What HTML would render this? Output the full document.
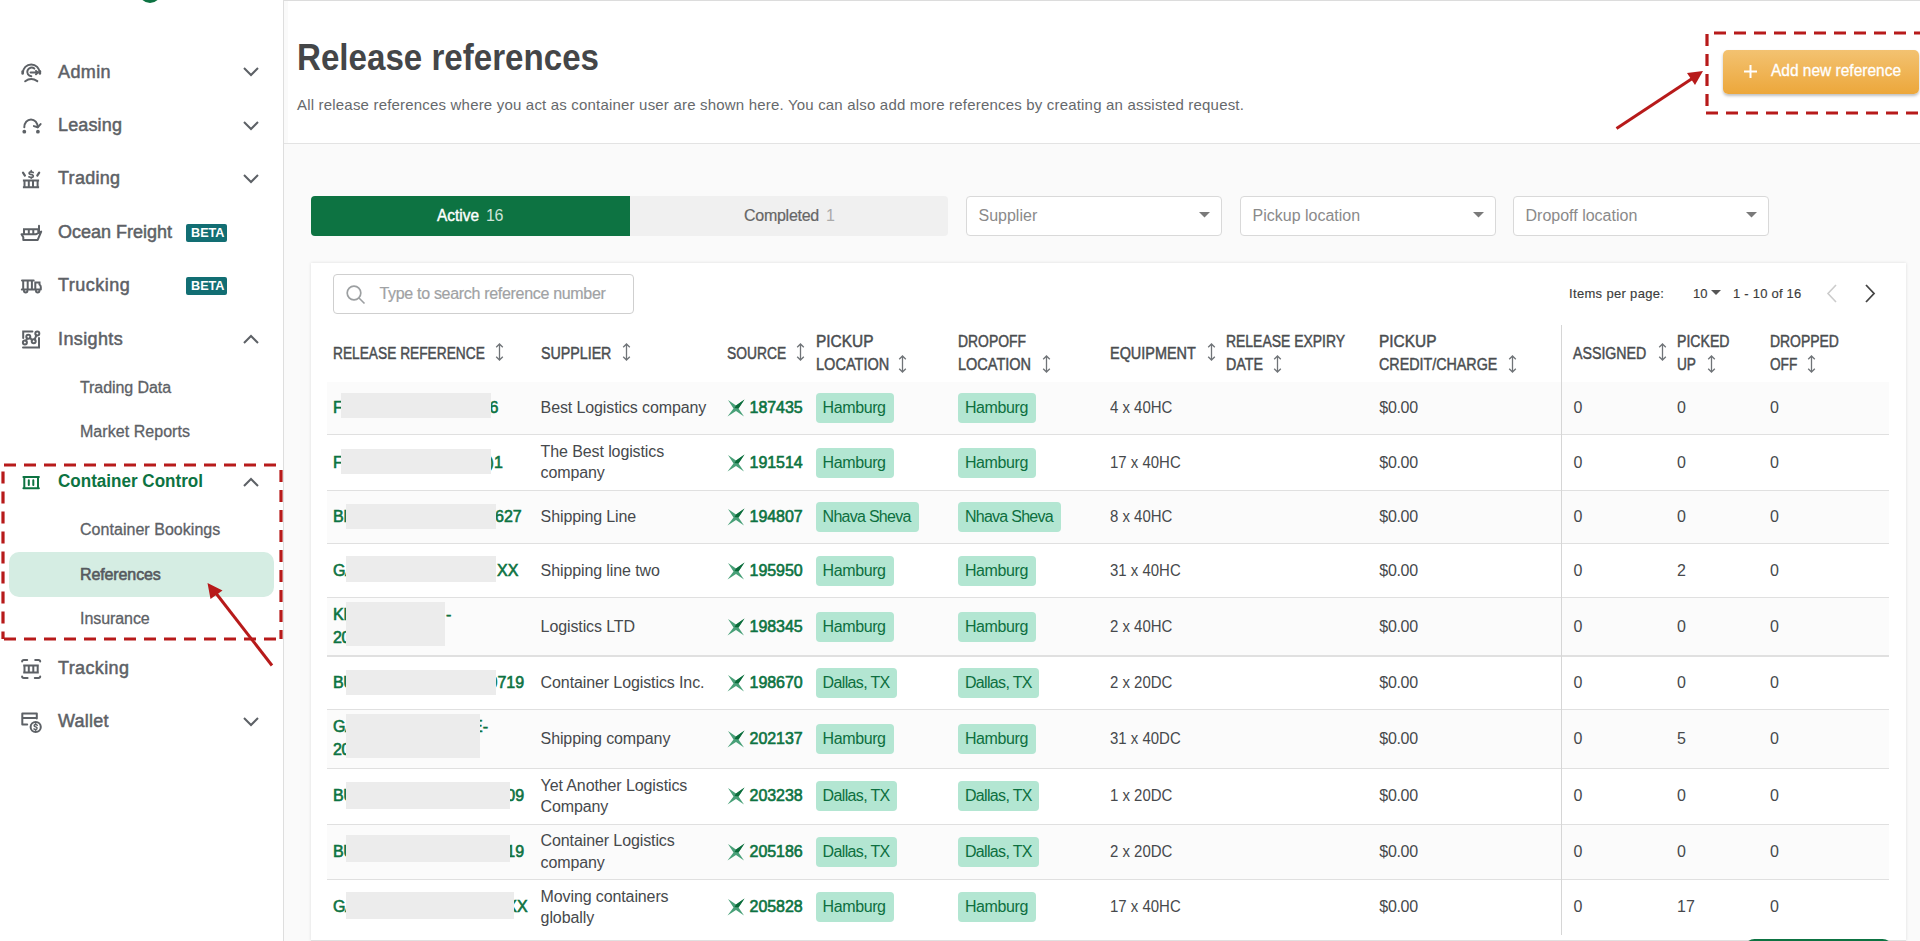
<!DOCTYPE html>
<html><head><meta charset="utf-8"><style>
html,body{margin:0;padding:0;width:1920px;height:941px;overflow:hidden;background:#fff;font-family:"Liberation Sans", sans-serif;}
body{position:relative}
</style></head><body><div style="position:absolute;left:0px;top:0px;width:284px;height:941px;background:#fff"></div><div style="position:absolute;left:283px;top:0px;width:1px;height:941px;background:#dedede"></div><div style="position:absolute;left:284px;top:0px;width:4px;height:941px;background:linear-gradient(90deg,rgba(0,0,0,0.05),rgba(0,0,0,0))"></div><div style="position:absolute;left:139px;top:-19px;width:22px;height:22px;border-radius:50%;background:#0d7342"></div><svg style="position:absolute;left:242px;top:65.35px" width="18" height="12" viewBox="0 0 18 12"><path d="M2 3 L9 10 L16 3" fill="none" stroke="#5d6166" stroke-width="2"/></svg><svg style="position:absolute;left:242px;top:118.9px" width="18" height="12" viewBox="0 0 18 12"><path d="M2 3 L9 10 L16 3" fill="none" stroke="#5d6166" stroke-width="2"/></svg><svg style="position:absolute;left:242px;top:172.3px" width="18" height="12" viewBox="0 0 18 12"><path d="M2 3 L9 10 L16 3" fill="none" stroke="#5d6166" stroke-width="2"/></svg><svg style="position:absolute;left:242px;top:334.2px" width="18" height="12" viewBox="0 0 18 12"><path d="M2 9 L9 2 L16 9" fill="none" stroke="#5d6166" stroke-width="2"/></svg><div style="position:absolute;left:186px;top:223.8px;width:41px;height:18.0px;background:#126e73;border-radius:2px"></div><div style="position:absolute;left:186px;top:277.2px;width:41px;height:18.0px;background:#126e73;border-radius:2px"></div><svg style="position:absolute;left:242px;top:476.5px" width="18" height="12" viewBox="0 0 18 12"><path d="M2 9 L9 2 L16 9" fill="none" stroke="#5d6166" stroke-width="2"/></svg><div style="position:absolute;left:9px;top:552px;width:265px;height:45px;background:#d5ede3;border-radius:10px"></div><svg style="position:absolute;left:242px;top:715px" width="18" height="12" viewBox="0 0 18 12"><path d="M2 3 L9 10 L16 3" fill="none" stroke="#5d6166" stroke-width="2"/></svg><svg style="position:absolute;left:21px;top:62px;overflow:visible" width="21" height="21" viewBox="0 0 21 21" fill="none" stroke="#5d6166" stroke-width="2" stroke-linecap="round"><path d="M1.9 10.8 A8.35 8.4 0 0 1 18.6 10.8"/><path d="M1.6 9.4 V11.6" stroke-width="2.5"/><path d="M18.9 9.2 V11.6" stroke-width="2.5"/><path d="M13.3 6.6 A4.3 4.3 0 1 0 10.3 14.2"/><path d="M9.6 10.6 H16.5"/><path d="M15 8.9 L16.8 10.6 L15 12.3"/><path d="M4.2 19.3 Q10 15 16.3 19.1"/></svg><svg style="position:absolute;left:21px;top:116px;overflow:visible" width="21" height="19" viewBox="0 0 21 19" fill="none" stroke="#5d6166" stroke-width="2" stroke-linecap="round"><path d="M3.3 11.3 A6.7 7.9 0 0 1 16.7 11.3"/><path d="M12.9 10.1 L16.7 11.3 L19.6 8.1" stroke-linejoin="round"/><circle cx="3.3" cy="15.7" r="1.9" fill="#5d6166" stroke="none"/><circle cx="16.9" cy="15.7" r="1.9" fill="#5d6166" stroke="none"/></svg><svg style="position:absolute;left:22px;top:171px;overflow:visible" width="18" height="18" viewBox="0 0 18 18" fill="none" stroke="#5d6166" stroke-width="2" stroke-linecap="round"><path d="M1 1.6 L2.9 4.6 M17.2 1.6 L15.3 4.6" stroke-width="2.2"/><path d="M11.2 1.5 Q9.2 0.4 7.5 1.3 Q6.4 2.8 8.6 3.4 L10.2 3.8 Q11.9 4.6 10.9 6 Q9 7 6.9 5.8" stroke-width="1.7"/><path d="M9.2 -0.4 V0.6 M9.2 6.4 V7.2" stroke-width="1.5"/><path d="M0.9 9.6 H17.1 M0.9 16.3 H17.1 M2.5 9.6 V16.3 M6.8 9.6 V16.3 M11 9.6 V16.3 M15.6 9.6 V16.3" stroke-linecap="butt"/></svg><svg style="position:absolute;left:21px;top:225px;overflow:visible" width="21" height="16" viewBox="0 0 21 16" fill="none" stroke="#5d6166" stroke-width="2" stroke-linecap="round"><path d="M0.5 9.3 H14.7 L20.2 6.6 L16.7 14.9 H2.3 V12.2 Z" stroke-linejoin="round"/><path d="M3 9.3 V4.2 H17.3 V7.5 M7.8 4.2 V9.3 M12.3 4.2 V9.3" stroke-linecap="butt"/><path d="M18 0.8 V6.2"/></svg><svg style="position:absolute;left:21px;top:279px;overflow:visible" width="21" height="15" viewBox="0 0 21 15" fill="none" stroke="#5d6166" stroke-width="2" stroke-linecap="round"><path d="M1 1.5 H12.7 M2.2 1.5 V10.5 M6.7 1.5 V10.5 M10.9 1.5 V10.5 M0.8 10.5 H19.6 M14.3 10.5 V3.5 H18.5 V5.5 Q19.8 6.5 19.8 8 V10.5"/><path d="M3 11.8 A1.7 1.7 0 0 0 6.4 11.8 M15 11.8 A1.7 1.7 0 0 0 18.4 11.8"/></svg><svg style="position:absolute;left:22px;top:330px;overflow:visible" width="18" height="19" viewBox="0 0 18 19" fill="none" stroke="#5d6166" stroke-width="2" stroke-linecap="round"><path d="M1.2 7.9 V1.6 H10.4 M17 7.9 V17.5 H1"/><circle cx="2.9" cy="12.4" r="2"/><circle cx="6.3" cy="6.8" r="2"/><circle cx="11.7" cy="11.3" r="2"/><circle cx="15.3" cy="3.6" r="2"/><path d="M4 10.6 L5.2 8.6 M8.1 7.8 L10 10.2 M12.6 9.5 L14.4 5.4"/></svg><svg style="position:absolute;left:23px;top:475.5px;overflow:visible" width="17" height="14" viewBox="0 0 17 14" fill="none" stroke="#0d7342" stroke-width="2" stroke-linecap="round"><path d="M0.4 1 H15.9 M0.4 12.2 H15.9"/><path d="M1.3 1 V12.2 M15 1 V12.2" stroke-linecap="butt"/><path d="M5.8 4.2 V8.9 M10.3 4.2 V8.9"/></svg><svg style="position:absolute;left:21px;top:659px;overflow:visible" width="20" height="20" viewBox="0 0 20 20" fill="none" stroke="#5d6166" stroke-width="2" stroke-linecap="round"><path d="M1.1 2.6 Q1.1 1.1 2.8 1.1 H6.2 M14.2 1.1 H17.5 Q19.2 1.1 19.2 2.6 M1.1 17.6 Q1.1 19 2.8 19 H6.6 M13.8 19 H17.5 Q19.2 19 19.2 17.6"/><path d="M2.2 6.6 H17.8 M2.2 13.4 H17.8 M3.5 6.6 V13.4 M7.8 6.6 V13.4 M12.3 6.6 V13.4 M16.7 6.6 V13.4" stroke-linecap="butt"/></svg><svg style="position:absolute;left:21px;top:711px;overflow:visible" width="21" height="22" viewBox="0 0 21 22" fill="none" stroke="#5d6166" stroke-width="2" stroke-linecap="round"><path d="M6.2 13.6 H1.3 V2.6 H15.8 V7.6 M1.3 6.9 H15.8" stroke-linejoin="round"/><circle cx="14.7" cy="16" r="5.1"/><path d="M16.3 14.3 Q14.8 13.1 13.4 13.8 Q12.6 15 14.2 15.7 L15.2 16.1 Q16.6 16.9 15.7 18.1 Q14.2 18.9 12.9 17.9" stroke-width="1.4"/><path d="M14.7 12.3 V13.1 M14.7 18.9 V19.7" stroke-width="1.2"/></svg><div style="position:absolute;left:284px;top:0px;width:1636px;height:941px;background:#fafafa"></div><div style="position:absolute;left:288px;top:0px;width:1632px;height:143px;background:#fff"></div><div style="position:absolute;left:284px;top:0px;width:1636px;height:1px;background:#dcdcdc"></div><div style="position:absolute;left:284px;top:143px;width:1636px;height:1px;background:#e3e3e3"></div><div style="position:absolute;left:1723px;top:50px;width:196px;height:44px;background:linear-gradient(#f3c271,#eca73b);border-radius:5px;box-shadow:0 2px 3px rgba(0,0,0,0.25)"></div><div style="position:absolute;left:311px;top:196px;width:319px;height:40px;background:#0d7342;border-radius:4px 0 0 4px"></div><div style="position:absolute;left:630px;top:196px;width:318px;height:40px;background:#f0f0f0;border-radius:0 4px 4px 0"></div><div style="position:absolute;left:966px;top:196px;width:256px;height:40px;background:#fff;border:1px solid #d9d9d9;border-radius:4px;box-sizing:border-box"></div><svg style="position:absolute;left:1199px;top:212px" width="11" height="6" viewBox="0 0 11 6"><path d="M0 0 H11 L5.5 5.5 Z" fill="#7a7a7a"/></svg><div style="position:absolute;left:1240px;top:196px;width:256px;height:40px;background:#fff;border:1px solid #d9d9d9;border-radius:4px;box-sizing:border-box"></div><svg style="position:absolute;left:1473px;top:212px" width="11" height="6" viewBox="0 0 11 6"><path d="M0 0 H11 L5.5 5.5 Z" fill="#7a7a7a"/></svg><div style="position:absolute;left:1513px;top:196px;width:256px;height:40px;background:#fff;border:1px solid #d9d9d9;border-radius:4px;box-sizing:border-box"></div><svg style="position:absolute;left:1746px;top:212px" width="11" height="6" viewBox="0 0 11 6"><path d="M0 0 H11 L5.5 5.5 Z" fill="#7a7a7a"/></svg><div style="position:absolute;left:311px;top:263px;width:1595px;height:678px;background:#fff;box-shadow:0 0 3px rgba(0,0,0,0.12)"></div><div style="position:absolute;left:333px;top:274px;width:301px;height:40px;border:1px solid #cfcfcf;border-radius:4px;box-sizing:border-box;background:#fff"></div><svg style="position:absolute;left:345px;top:284px" width="22" height="22" viewBox="0 0 22 22"><circle cx="9" cy="9" r="6.8" fill="none" stroke="#9c9fa1" stroke-width="1.7"/><path d="M14 14 L19.5 19.5" stroke="#9c9fa1" stroke-width="1.6"/></svg><svg style="position:absolute;left:1711px;top:290px" width="10" height="6" viewBox="0 0 10 6"><path d="M0 0 H10 L5 5 Z" fill="#555"/></svg><svg style="position:absolute;left:1826px;top:284px" width="12" height="19" viewBox="0 0 12 19"><path d="M10 1 L2 9.5 L10 18" fill="none" stroke="#cccccc" stroke-width="1.6"/></svg><svg style="position:absolute;left:1864px;top:284px" width="12" height="19" viewBox="0 0 12 19"><path d="M2 1 L10 9.5 L2 18" fill="none" stroke="#444" stroke-width="1.8"/></svg><svg style="position:absolute;left:495px;top:343px" width="9" height="18" viewBox="0 0 9 18"><path d="M4.5 1 V17 M1.2 4.3 L4.5 1 L7.8 4.3 M1.2 13.7 L4.5 17 L7.8 13.7" fill="none" stroke="#707478" stroke-width="1.3"/></svg><svg style="position:absolute;left:621.5px;top:343px" width="9" height="18" viewBox="0 0 9 18"><path d="M4.5 1 V17 M1.2 4.3 L4.5 1 L7.8 4.3 M1.2 13.7 L4.5 17 L7.8 13.7" fill="none" stroke="#707478" stroke-width="1.3"/></svg><svg style="position:absolute;left:796px;top:343px" width="9" height="18" viewBox="0 0 9 18"><path d="M4.5 1 V17 M1.2 4.3 L4.5 1 L7.8 4.3 M1.2 13.7 L4.5 17 L7.8 13.7" fill="none" stroke="#707478" stroke-width="1.3"/></svg><svg style="position:absolute;left:898px;top:354.5px" width="9" height="18" viewBox="0 0 9 18"><path d="M4.5 1 V17 M1.2 4.3 L4.5 1 L7.8 4.3 M1.2 13.7 L4.5 17 L7.8 13.7" fill="none" stroke="#707478" stroke-width="1.3"/></svg><svg style="position:absolute;left:1041.5px;top:354.5px" width="9" height="18" viewBox="0 0 9 18"><path d="M4.5 1 V17 M1.2 4.3 L4.5 1 L7.8 4.3 M1.2 13.7 L4.5 17 L7.8 13.7" fill="none" stroke="#707478" stroke-width="1.3"/></svg><svg style="position:absolute;left:1207px;top:343px" width="9" height="18" viewBox="0 0 9 18"><path d="M4.5 1 V17 M1.2 4.3 L4.5 1 L7.8 4.3 M1.2 13.7 L4.5 17 L7.8 13.7" fill="none" stroke="#707478" stroke-width="1.3"/></svg><svg style="position:absolute;left:1273px;top:354.5px" width="9" height="18" viewBox="0 0 9 18"><path d="M4.5 1 V17 M1.2 4.3 L4.5 1 L7.8 4.3 M1.2 13.7 L4.5 17 L7.8 13.7" fill="none" stroke="#707478" stroke-width="1.3"/></svg><svg style="position:absolute;left:1508px;top:354.5px" width="9" height="18" viewBox="0 0 9 18"><path d="M4.5 1 V17 M1.2 4.3 L4.5 1 L7.8 4.3 M1.2 13.7 L4.5 17 L7.8 13.7" fill="none" stroke="#707478" stroke-width="1.3"/></svg><svg style="position:absolute;left:1657.5px;top:343px" width="9" height="18" viewBox="0 0 9 18"><path d="M4.5 1 V17 M1.2 4.3 L4.5 1 L7.8 4.3 M1.2 13.7 L4.5 17 L7.8 13.7" fill="none" stroke="#707478" stroke-width="1.3"/></svg><svg style="position:absolute;left:1707px;top:354.5px" width="9" height="18" viewBox="0 0 9 18"><path d="M4.5 1 V17 M1.2 4.3 L4.5 1 L7.8 4.3 M1.2 13.7 L4.5 17 L7.8 13.7" fill="none" stroke="#707478" stroke-width="1.3"/></svg><svg style="position:absolute;left:1807px;top:354.5px" width="9" height="18" viewBox="0 0 9 18"><path d="M4.5 1 V17 M1.2 4.3 L4.5 1 L7.8 4.3 M1.2 13.7 L4.5 17 L7.8 13.7" fill="none" stroke="#707478" stroke-width="1.3"/></svg><div style="position:absolute;left:327px;top:381.7px;width:1562px;height:53.0px;background:#fbfbfb"></div><svg style="position:absolute;left:727px;top:399.2px" width="18" height="18" viewBox="0 0 18 18"><path d="M1 1 L9 6.5 L17.5 0.5 L11.5 9.5 L17 17.5 L9 12 L0.5 17.5 L6.5 9.5 Z" fill="#48a078"/><path d="M17.5 0.5 L9 6.5 L7.5 9 L11.5 9.5 Z" fill="#0b6b3a"/></svg><div style="position:absolute;left:815.6px;top:393.2px;width:78.0px;height:30.0px;background:#b3e6d2;border-radius:4px"></div><div style="position:absolute;left:957.9px;top:393.2px;width:78.00000000000011px;height:30.0px;background:#b3e6d2;border-radius:4px"></div><div style="position:absolute;left:327px;top:434px;width:1562px;height:1px;background:#e0e0e0"></div><svg style="position:absolute;left:727px;top:453.7px" width="18" height="18" viewBox="0 0 18 18"><path d="M1 1 L9 6.5 L17.5 0.5 L11.5 9.5 L17 17.5 L9 12 L0.5 17.5 L6.5 9.5 Z" fill="#48a078"/><path d="M17.5 0.5 L9 6.5 L7.5 9 L11.5 9.5 Z" fill="#0b6b3a"/></svg><div style="position:absolute;left:815.6px;top:447.7px;width:78.0px;height:30.0px;background:#b3e6d2;border-radius:4px"></div><div style="position:absolute;left:957.9px;top:447.7px;width:78.00000000000011px;height:30.0px;background:#b3e6d2;border-radius:4px"></div><div style="position:absolute;left:327px;top:490.7px;width:1562px;height:52.900000000000034px;background:#fbfbfb"></div><div style="position:absolute;left:327px;top:490px;width:1562px;height:1px;background:#e0e0e0"></div><svg style="position:absolute;left:727px;top:508.15px" width="18" height="18" viewBox="0 0 18 18"><path d="M1 1 L9 6.5 L17.5 0.5 L11.5 9.5 L17 17.5 L9 12 L0.5 17.5 L6.5 9.5 Z" fill="#48a078"/><path d="M17.5 0.5 L9 6.5 L7.5 9 L11.5 9.5 Z" fill="#0b6b3a"/></svg><div style="position:absolute;left:815.6px;top:502.15px;width:103.0px;height:30.0px;background:#b3e6d2;border-radius:4px"></div><div style="position:absolute;left:957.9px;top:502.15px;width:103.00000000000011px;height:30.0px;background:#b3e6d2;border-radius:4px"></div><div style="position:absolute;left:327px;top:543px;width:1562px;height:1px;background:#e0e0e0"></div><svg style="position:absolute;left:727px;top:561.5px" width="18" height="18" viewBox="0 0 18 18"><path d="M1 1 L9 6.5 L17.5 0.5 L11.5 9.5 L17 17.5 L9 12 L0.5 17.5 L6.5 9.5 Z" fill="#48a078"/><path d="M17.5 0.5 L9 6.5 L7.5 9 L11.5 9.5 Z" fill="#0b6b3a"/></svg><div style="position:absolute;left:815.6px;top:555.5px;width:78.0px;height:30.0px;background:#b3e6d2;border-radius:4px"></div><div style="position:absolute;left:957.9px;top:555.5px;width:78.00000000000011px;height:30.0px;background:#b3e6d2;border-radius:4px"></div><div style="position:absolute;left:327px;top:597.4px;width:1562px;height:58.89999999999998px;background:#fbfbfb"></div><div style="position:absolute;left:327px;top:597px;width:1562px;height:1px;background:#e0e0e0"></div><svg style="position:absolute;left:727px;top:617.8499999999999px" width="18" height="18" viewBox="0 0 18 18"><path d="M1 1 L9 6.5 L17.5 0.5 L11.5 9.5 L17 17.5 L9 12 L0.5 17.5 L6.5 9.5 Z" fill="#48a078"/><path d="M17.5 0.5 L9 6.5 L7.5 9 L11.5 9.5 Z" fill="#0b6b3a"/></svg><div style="position:absolute;left:815.6px;top:611.8499999999999px;width:78.0px;height:30.0px;background:#b3e6d2;border-radius:4px"></div><div style="position:absolute;left:957.9px;top:611.8499999999999px;width:78.00000000000011px;height:30.0px;background:#b3e6d2;border-radius:4px"></div><div style="position:absolute;left:327px;top:655px;width:1562px;height:2px;background:#e0e0e0"></div><svg style="position:absolute;left:727px;top:673.9px" width="18" height="18" viewBox="0 0 18 18"><path d="M1 1 L9 6.5 L17.5 0.5 L11.5 9.5 L17 17.5 L9 12 L0.5 17.5 L6.5 9.5 Z" fill="#48a078"/><path d="M17.5 0.5 L9 6.5 L7.5 9 L11.5 9.5 Z" fill="#0b6b3a"/></svg><div style="position:absolute;left:815.6px;top:667.9px;width:81.5px;height:30.0px;background:#b3e6d2;border-radius:4px"></div><div style="position:absolute;left:957.9px;top:667.9px;width:81.50000000000011px;height:30.0px;background:#b3e6d2;border-radius:4px"></div><div style="position:absolute;left:327px;top:709.5px;width:1562px;height:58.5px;background:#fbfbfb"></div><div style="position:absolute;left:327px;top:709px;width:1562px;height:1px;background:#e0e0e0"></div><svg style="position:absolute;left:727px;top:729.75px" width="18" height="18" viewBox="0 0 18 18"><path d="M1 1 L9 6.5 L17.5 0.5 L11.5 9.5 L17 17.5 L9 12 L0.5 17.5 L6.5 9.5 Z" fill="#48a078"/><path d="M17.5 0.5 L9 6.5 L7.5 9 L11.5 9.5 Z" fill="#0b6b3a"/></svg><div style="position:absolute;left:815.6px;top:723.75px;width:78.0px;height:30.0px;background:#b3e6d2;border-radius:4px"></div><div style="position:absolute;left:957.9px;top:723.75px;width:78.00000000000011px;height:30.0px;background:#b3e6d2;border-radius:4px"></div><div style="position:absolute;left:327px;top:768px;width:1562px;height:1px;background:#e0e0e0"></div><svg style="position:absolute;left:727px;top:787.3px" width="18" height="18" viewBox="0 0 18 18"><path d="M1 1 L9 6.5 L17.5 0.5 L11.5 9.5 L17 17.5 L9 12 L0.5 17.5 L6.5 9.5 Z" fill="#48a078"/><path d="M17.5 0.5 L9 6.5 L7.5 9 L11.5 9.5 Z" fill="#0b6b3a"/></svg><div style="position:absolute;left:815.6px;top:781.3px;width:81.5px;height:30.0px;background:#b3e6d2;border-radius:4px"></div><div style="position:absolute;left:957.9px;top:781.3px;width:81.50000000000011px;height:30.0px;background:#b3e6d2;border-radius:4px"></div><div style="position:absolute;left:327px;top:824.6px;width:1562px;height:54.799999999999955px;background:#fbfbfb"></div><div style="position:absolute;left:327px;top:824px;width:1562px;height:1px;background:#e0e0e0"></div><svg style="position:absolute;left:727px;top:843.0px" width="18" height="18" viewBox="0 0 18 18"><path d="M1 1 L9 6.5 L17.5 0.5 L11.5 9.5 L17 17.5 L9 12 L0.5 17.5 L6.5 9.5 Z" fill="#48a078"/><path d="M17.5 0.5 L9 6.5 L7.5 9 L11.5 9.5 Z" fill="#0b6b3a"/></svg><div style="position:absolute;left:815.6px;top:837.0px;width:81.5px;height:30.0px;background:#b3e6d2;border-radius:4px"></div><div style="position:absolute;left:957.9px;top:837.0px;width:81.50000000000011px;height:30.0px;background:#b3e6d2;border-radius:4px"></div><div style="position:absolute;left:327px;top:879px;width:1562px;height:1px;background:#e0e0e0"></div><svg style="position:absolute;left:727px;top:898.2px" width="18" height="18" viewBox="0 0 18 18"><path d="M1 1 L9 6.5 L17.5 0.5 L11.5 9.5 L17 17.5 L9 12 L0.5 17.5 L6.5 9.5 Z" fill="#48a078"/><path d="M17.5 0.5 L9 6.5 L7.5 9 L11.5 9.5 Z" fill="#0b6b3a"/></svg><div style="position:absolute;left:815.6px;top:892.2px;width:78.0px;height:30.0px;background:#b3e6d2;border-radius:4px"></div><div style="position:absolute;left:957.9px;top:892.2px;width:78.00000000000011px;height:30.0px;background:#b3e6d2;border-radius:4px"></div><div style="position:absolute;left:58px;top:60.51px;font-size:18px;line-height:22px;font-weight:400;color:#5d6166;white-space:nowrap;letter-spacing:0.400px;-webkit-text-stroke:0.5px #5d6166;">Admin</div><div style="position:absolute;left:58px;top:114.06px;font-size:18px;line-height:22px;font-weight:400;color:#5d6166;white-space:nowrap;letter-spacing:0.143px;-webkit-text-stroke:0.5px #5d6166;">Leasing</div><div style="position:absolute;left:58px;top:167.46px;font-size:18px;line-height:22px;font-weight:400;color:#5d6166;white-space:nowrap;letter-spacing:0.286px;-webkit-text-stroke:0.5px #5d6166;">Trading</div><div style="position:absolute;left:58px;top:220.96px;font-size:18px;line-height:22px;font-weight:400;color:#5d6166;white-space:nowrap;-webkit-text-stroke:0.5px #5d6166;">Ocean Freight</div><div style="position:absolute;left:58px;top:274.36px;font-size:18px;line-height:22px;font-weight:400;color:#5d6166;white-space:nowrap;letter-spacing:0.500px;-webkit-text-stroke:0.5px #5d6166;">Trucking</div><div style="position:absolute;left:58px;top:327.86px;font-size:18px;line-height:22px;font-weight:400;color:#5d6166;white-space:nowrap;letter-spacing:0.375px;-webkit-text-stroke:0.5px #5d6166;">Insights</div><div style="position:absolute;left:190.5px;top:223.69px;font-size:13.3px;line-height:17px;font-weight:700;color:#fff;white-space:nowrap;transform:scaleX(0.9512);transform-origin:0 0;">BETA</div><div style="position:absolute;left:190.5px;top:277.09px;font-size:13.3px;line-height:17px;font-weight:700;color:#fff;white-space:nowrap;transform:scaleX(0.9512);transform-origin:0 0;">BETA</div><div style="position:absolute;left:80px;top:378.06px;font-size:16px;line-height:20px;font-weight:400;color:#5d6166;white-space:nowrap;letter-spacing:-0.076px;-webkit-text-stroke:0.3px #5d6166;">Trading Data</div><div style="position:absolute;left:80px;top:422.46px;font-size:16px;line-height:20px;font-weight:400;color:#5d6166;white-space:nowrap;letter-spacing:0.045px;-webkit-text-stroke:0.3px #5d6166;">Market Reports</div><div style="position:absolute;left:58px;top:470.16px;font-size:18px;line-height:22px;font-weight:700;color:#0d7342;white-space:nowrap;transform:scaleX(0.9477);transform-origin:0 0;">Container Control</div><div style="position:absolute;left:80px;top:520.46px;font-size:16px;line-height:20px;font-weight:400;color:#5d6166;white-space:nowrap;letter-spacing:0.037px;-webkit-text-stroke:0.3px #5d6166;">Container Bookings</div><div style="position:absolute;left:80px;top:564.96px;font-size:16px;line-height:20px;font-weight:400;color:#55595e;white-space:nowrap;letter-spacing:-0.113px;-webkit-text-stroke:0.6px #55595e;">References</div><div style="position:absolute;left:80px;top:608.96px;font-size:16px;line-height:20px;font-weight:400;color:#5d6166;white-space:nowrap;letter-spacing:-0.063px;-webkit-text-stroke:0.3px #5d6166;">Insurance</div><div style="position:absolute;left:58px;top:657.16px;font-size:18px;line-height:22px;font-weight:400;color:#5d6166;white-space:nowrap;letter-spacing:0.375px;-webkit-text-stroke:0.5px #5d6166;">Tracking</div><div style="position:absolute;left:58px;top:710.16px;font-size:18px;line-height:22px;font-weight:400;color:#5d6166;white-space:nowrap;letter-spacing:0.250px;-webkit-text-stroke:0.5px #5d6166;">Wallet</div><div style="position:absolute;left:297px;top:34.93px;font-size:36px;line-height:45px;font-weight:700;color:#444648;white-space:nowrap;transform:scaleX(0.9200);transform-origin:0 0;">Release references</div><div style="position:absolute;left:297px;top:94.70px;font-size:15px;line-height:19px;font-weight:400;color:#66696c;white-space:nowrap;letter-spacing:0.189px;">All release references where you act as container user are shown here. You can also add more references by creating an assisted request.</div><div style="position:absolute;left:1771px;top:60.96px;font-size:16px;line-height:20px;font-weight:400;color:#fff;white-space:nowrap;transform:scaleX(0.9679);transform-origin:0 0;-webkit-text-stroke:0.3px #fff;">Add new reference</div><div style="position:absolute;left:437px;top:205.96px;font-size:16px;line-height:20px;font-weight:400;color:#fff;white-space:nowrap;transform:scaleX(0.9638);transform-origin:0 0;-webkit-text-stroke:0.4px #fff;">Active</div><div style="position:absolute;left:486px;top:205.96px;font-size:16px;line-height:20px;font-weight:400;color:#cfe3d8;white-space:nowrap;letter-spacing:-0.398px;">16</div><div style="position:absolute;left:744px;top:205.96px;font-size:16px;line-height:20px;font-weight:400;color:#666;white-space:nowrap;letter-spacing:-0.264px;-webkit-text-stroke:0.2px #666;">Completed</div><div style="position:absolute;left:826px;top:205.96px;font-size:16px;line-height:20px;font-weight:400;color:#aaa;white-space:nowrap;">1</div><div style="position:absolute;left:978.5px;top:205.96px;font-size:16px;line-height:20px;font-weight:400;color:#8a8a8a;white-space:nowrap;">Supplier</div><div style="position:absolute;left:1252.5px;top:205.96px;font-size:16px;line-height:20px;font-weight:400;color:#8a8a8a;white-space:nowrap;">Pickup location</div><div style="position:absolute;left:1525.5px;top:205.96px;font-size:16px;line-height:20px;font-weight:400;color:#8a8a8a;white-space:nowrap;">Dropoff location</div><div style="position:absolute;left:379.5px;top:284.46px;font-size:16px;line-height:20px;font-weight:400;color:#a0a2a4;white-space:nowrap;letter-spacing:-0.312px;-webkit-text-stroke:0.2px #a0a2a4;">Type to search reference number</div><div style="position:absolute;left:1569px;top:285.50px;font-size:13px;line-height:16px;font-weight:400;color:#3c3c3c;white-space:nowrap;letter-spacing:0.331px;-webkit-text-stroke:0.15px #3c3c3c;">Items per page:</div><div style="position:absolute;left:1693px;top:285.50px;font-size:13px;line-height:16px;font-weight:400;color:#3c3c3c;white-space:nowrap;-webkit-text-stroke:0.15px #3c3c3c;">10</div><div style="position:absolute;left:1733px;top:285.50px;font-size:13px;line-height:16px;font-weight:400;color:#3c3c3c;white-space:nowrap;letter-spacing:0.227px;-webkit-text-stroke:0.15px #3c3c3c;">1 - 10 of 16</div><div style="position:absolute;left:333px;top:343.56px;font-size:16px;line-height:20px;font-weight:400;color:#4a4d50;white-space:nowrap;transform:scaleX(0.8579);transform-origin:0 0;-webkit-text-stroke:0.45px #4a4d50;">RELEASE REFERENCE</div><div style="position:absolute;left:540.6px;top:343.56px;font-size:16px;line-height:20px;font-weight:400;color:#4a4d50;white-space:nowrap;transform:scaleX(0.8896);transform-origin:0 0;-webkit-text-stroke:0.45px #4a4d50;">SUPPLIER</div><div style="position:absolute;left:727.3px;top:343.56px;font-size:16px;line-height:20px;font-weight:400;color:#4a4d50;white-space:nowrap;transform:scaleX(0.8634);transform-origin:0 0;-webkit-text-stroke:0.45px #4a4d50;">SOURCE</div><div style="position:absolute;left:815.6px;top:331.56px;font-size:16px;line-height:20px;font-weight:400;color:#4a4d50;white-space:nowrap;transform:scaleX(0.9651);transform-origin:0 0;-webkit-text-stroke:0.45px #4a4d50;">PICKUP</div><div style="position:absolute;left:815.6px;top:354.66px;font-size:16px;line-height:20px;font-weight:400;color:#4a4d50;white-space:nowrap;transform:scaleX(0.9093);transform-origin:0 0;-webkit-text-stroke:0.45px #4a4d50;">LOCATION</div><div style="position:absolute;left:957.9px;top:331.56px;font-size:16px;line-height:20px;font-weight:400;color:#4a4d50;white-space:nowrap;transform:scaleX(0.8694);transform-origin:0 0;-webkit-text-stroke:0.45px #4a4d50;">DROPOFF</div><div style="position:absolute;left:957.9px;top:354.66px;font-size:16px;line-height:20px;font-weight:400;color:#4a4d50;white-space:nowrap;transform:scaleX(0.9068);transform-origin:0 0;-webkit-text-stroke:0.45px #4a4d50;">LOCATION</div><div style="position:absolute;left:1110.2px;top:343.56px;font-size:16px;line-height:20px;font-weight:400;color:#4a4d50;white-space:nowrap;transform:scaleX(0.9020);transform-origin:0 0;-webkit-text-stroke:0.45px #4a4d50;">EQUIPMENT</div><div style="position:absolute;left:1226px;top:331.56px;font-size:16px;line-height:20px;font-weight:400;color:#4a4d50;white-space:nowrap;transform:scaleX(0.8708);transform-origin:0 0;-webkit-text-stroke:0.45px #4a4d50;">RELEASE EXPIRY</div><div style="position:absolute;left:1226px;top:354.66px;font-size:16px;line-height:20px;font-weight:400;color:#4a4d50;white-space:nowrap;transform:scaleX(0.8919);transform-origin:0 0;-webkit-text-stroke:0.45px #4a4d50;">DATE</div><div style="position:absolute;left:1379.3px;top:331.56px;font-size:16px;line-height:20px;font-weight:400;color:#4a4d50;white-space:nowrap;transform:scaleX(0.9651);transform-origin:0 0;-webkit-text-stroke:0.45px #4a4d50;">PICKUP</div><div style="position:absolute;left:1379.3px;top:354.66px;font-size:16px;line-height:20px;font-weight:400;color:#4a4d50;white-space:nowrap;transform:scaleX(0.8931);transform-origin:0 0;-webkit-text-stroke:0.45px #4a4d50;">CREDIT/CHARGE</div><div style="position:absolute;left:1573.3px;top:343.56px;font-size:16px;line-height:20px;font-weight:400;color:#4a4d50;white-space:nowrap;transform:scaleX(0.8865);transform-origin:0 0;-webkit-text-stroke:0.45px #4a4d50;">ASSIGNED</div><div style="position:absolute;left:1676.9px;top:331.56px;font-size:16px;line-height:20px;font-weight:400;color:#4a4d50;white-space:nowrap;transform:scaleX(0.8812);transform-origin:0 0;-webkit-text-stroke:0.45px #4a4d50;">PICKED</div><div style="position:absolute;left:1676.9px;top:354.66px;font-size:16px;line-height:20px;font-weight:400;color:#4a4d50;white-space:nowrap;transform:scaleX(0.8545);transform-origin:0 0;-webkit-text-stroke:0.45px #4a4d50;">UP</div><div style="position:absolute;left:1769.6px;top:331.56px;font-size:16px;line-height:20px;font-weight:400;color:#4a4d50;white-space:nowrap;transform:scaleX(0.8708);transform-origin:0 0;-webkit-text-stroke:0.45px #4a4d50;">DROPPED</div><div style="position:absolute;left:1769.6px;top:354.66px;font-size:16px;line-height:20px;font-weight:400;color:#4a4d50;white-space:nowrap;transform:scaleX(0.8531);transform-origin:0 0;-webkit-text-stroke:0.45px #4a4d50;">OFF</div><div style="position:absolute;left:333px;top:398.26px;font-size:16px;line-height:20px;font-weight:400;color:#0d7342;white-space:nowrap;-webkit-text-stroke:0.6px #0d7342;letter-spacing:-0.5px">F</div><div style="position:absolute;right:1421.70px;top:398.26px;font-size:16px;line-height:20px;font-weight:400;color:#0d7342;white-space:nowrap;-webkit-text-stroke:0.6px #0d7342;">6</div><div style="position:absolute;left:540.6px;top:398.26px;font-size:16px;line-height:20px;font-weight:400;color:#46494c;white-space:nowrap;letter-spacing:-0.115px;">Best Logistics company</div><div style="position:absolute;left:749.6px;top:398.26px;font-size:16px;line-height:20px;font-weight:400;color:#0d7342;white-space:nowrap;letter-spacing:-0.065px;-webkit-text-stroke:0.6px #0d7342;">187435</div><div style="position:absolute;left:822.6px;top:398.26px;font-size:16px;line-height:20px;font-weight:400;color:#0d6f3f;white-space:nowrap;letter-spacing:-0.402px;">Hamburg</div><div style="position:absolute;left:964.9px;top:398.26px;font-size:16px;line-height:20px;font-weight:400;color:#0d6f3f;white-space:nowrap;letter-spacing:-0.402px;">Hamburg</div><div style="position:absolute;left:1110.2px;top:398.26px;font-size:16px;line-height:20px;font-weight:400;color:#46494c;white-space:nowrap;transform:scaleX(0.9350);transform-origin:0 0;">4 x 40HC</div><div style="position:absolute;left:1379.3px;top:398.26px;font-size:16px;line-height:20px;font-weight:400;color:#46494c;white-space:nowrap;letter-spacing:-0.309px;">$0.00</div><div style="position:absolute;left:1573.5px;top:398.26px;font-size:16px;line-height:20px;font-weight:400;color:#46494c;white-space:nowrap;">0</div><div style="position:absolute;left:1677px;top:398.26px;font-size:16px;line-height:20px;font-weight:400;color:#46494c;white-space:nowrap;">0</div><div style="position:absolute;left:1770px;top:398.26px;font-size:16px;line-height:20px;font-weight:400;color:#46494c;white-space:nowrap;">0</div><div style="position:absolute;left:333px;top:452.76px;font-size:16px;line-height:20px;font-weight:400;color:#0d7342;white-space:nowrap;-webkit-text-stroke:0.6px #0d7342;letter-spacing:-0.5px">F</div><div style="position:absolute;right:1417.20px;top:452.76px;font-size:16px;line-height:20px;font-weight:400;color:#0d7342;white-space:nowrap;-webkit-text-stroke:0.6px #0d7342;">)1</div><div style="position:absolute;left:540.6px;top:442.16px;font-size:16px;line-height:20px;font-weight:400;color:#46494c;white-space:nowrap;letter-spacing:-0.104px;">The Best logistics</div><div style="position:absolute;left:540.6px;top:463.36px;font-size:16px;line-height:20px;font-weight:400;color:#46494c;white-space:nowrap;letter-spacing:-0.139px;">company</div><div style="position:absolute;left:749.6px;top:452.76px;font-size:16px;line-height:20px;font-weight:400;color:#0d7342;white-space:nowrap;letter-spacing:-0.065px;-webkit-text-stroke:0.6px #0d7342;">191514</div><div style="position:absolute;left:822.6px;top:452.76px;font-size:16px;line-height:20px;font-weight:400;color:#0d6f3f;white-space:nowrap;letter-spacing:-0.402px;">Hamburg</div><div style="position:absolute;left:964.9px;top:452.76px;font-size:16px;line-height:20px;font-weight:400;color:#0d6f3f;white-space:nowrap;letter-spacing:-0.402px;">Hamburg</div><div style="position:absolute;left:1110.2px;top:452.76px;font-size:16px;line-height:20px;font-weight:400;color:#46494c;white-space:nowrap;transform:scaleX(0.9350);transform-origin:0 0;">17 x 40HC</div><div style="position:absolute;left:1379.3px;top:452.76px;font-size:16px;line-height:20px;font-weight:400;color:#46494c;white-space:nowrap;letter-spacing:-0.309px;">$0.00</div><div style="position:absolute;left:1573.5px;top:452.76px;font-size:16px;line-height:20px;font-weight:400;color:#46494c;white-space:nowrap;">0</div><div style="position:absolute;left:1677px;top:452.76px;font-size:16px;line-height:20px;font-weight:400;color:#46494c;white-space:nowrap;">0</div><div style="position:absolute;left:1770px;top:452.76px;font-size:16px;line-height:20px;font-weight:400;color:#46494c;white-space:nowrap;">0</div><div style="position:absolute;left:333px;top:507.21px;font-size:16px;line-height:20px;font-weight:400;color:#0d7342;white-space:nowrap;-webkit-text-stroke:0.6px #0d7342;letter-spacing:-0.5px">BI</div><div style="position:absolute;right:1398.30px;top:507.21px;font-size:16px;line-height:20px;font-weight:400;color:#0d7342;white-space:nowrap;-webkit-text-stroke:0.6px #0d7342;">627</div><div style="position:absolute;left:540.6px;top:507.21px;font-size:16px;line-height:20px;font-weight:400;color:#46494c;white-space:nowrap;letter-spacing:-0.112px;">Shipping Line</div><div style="position:absolute;left:749.6px;top:507.21px;font-size:16px;line-height:20px;font-weight:400;color:#0d7342;white-space:nowrap;letter-spacing:-0.065px;-webkit-text-stroke:0.6px #0d7342;">194807</div><div style="position:absolute;left:822.6px;top:507.21px;font-size:16px;line-height:20px;font-weight:400;color:#0d6f3f;white-space:nowrap;letter-spacing:-0.733px;">Nhava Sheva</div><div style="position:absolute;left:964.9px;top:507.21px;font-size:16px;line-height:20px;font-weight:400;color:#0d6f3f;white-space:nowrap;letter-spacing:-0.733px;">Nhava Sheva</div><div style="position:absolute;left:1110.2px;top:507.21px;font-size:16px;line-height:20px;font-weight:400;color:#46494c;white-space:nowrap;transform:scaleX(0.9350);transform-origin:0 0;">8 x 40HC</div><div style="position:absolute;left:1379.3px;top:507.21px;font-size:16px;line-height:20px;font-weight:400;color:#46494c;white-space:nowrap;letter-spacing:-0.309px;">$0.00</div><div style="position:absolute;left:1573.5px;top:507.21px;font-size:16px;line-height:20px;font-weight:400;color:#46494c;white-space:nowrap;">0</div><div style="position:absolute;left:1677px;top:507.21px;font-size:16px;line-height:20px;font-weight:400;color:#46494c;white-space:nowrap;">0</div><div style="position:absolute;left:1770px;top:507.21px;font-size:16px;line-height:20px;font-weight:400;color:#46494c;white-space:nowrap;">0</div><div style="position:absolute;left:333px;top:560.56px;font-size:16px;line-height:20px;font-weight:400;color:#0d7342;white-space:nowrap;-webkit-text-stroke:0.6px #0d7342;letter-spacing:-0.5px">GA</div><div style="position:absolute;right:1401.70px;top:560.56px;font-size:16px;line-height:20px;font-weight:400;color:#0d7342;white-space:nowrap;-webkit-text-stroke:0.6px #0d7342;">XX</div><div style="position:absolute;left:540.6px;top:560.56px;font-size:16px;line-height:20px;font-weight:400;color:#46494c;white-space:nowrap;letter-spacing:-0.107px;">Shipping line two</div><div style="position:absolute;left:749.6px;top:560.56px;font-size:16px;line-height:20px;font-weight:400;color:#0d7342;white-space:nowrap;letter-spacing:-0.065px;-webkit-text-stroke:0.6px #0d7342;">195950</div><div style="position:absolute;left:822.6px;top:560.56px;font-size:16px;line-height:20px;font-weight:400;color:#0d6f3f;white-space:nowrap;letter-spacing:-0.402px;">Hamburg</div><div style="position:absolute;left:964.9px;top:560.56px;font-size:16px;line-height:20px;font-weight:400;color:#0d6f3f;white-space:nowrap;letter-spacing:-0.402px;">Hamburg</div><div style="position:absolute;left:1110.2px;top:560.56px;font-size:16px;line-height:20px;font-weight:400;color:#46494c;white-space:nowrap;transform:scaleX(0.9350);transform-origin:0 0;">31 x 40HC</div><div style="position:absolute;left:1379.3px;top:560.56px;font-size:16px;line-height:20px;font-weight:400;color:#46494c;white-space:nowrap;letter-spacing:-0.309px;">$0.00</div><div style="position:absolute;left:1573.5px;top:560.56px;font-size:16px;line-height:20px;font-weight:400;color:#46494c;white-space:nowrap;">0</div><div style="position:absolute;left:1677px;top:560.56px;font-size:16px;line-height:20px;font-weight:400;color:#46494c;white-space:nowrap;">2</div><div style="position:absolute;left:1770px;top:560.56px;font-size:16px;line-height:20px;font-weight:400;color:#46494c;white-space:nowrap;">0</div><div style="position:absolute;left:333px;top:605.41px;font-size:16px;line-height:20px;font-weight:400;color:#0d7342;white-space:nowrap;-webkit-text-stroke:0.6px #0d7342;letter-spacing:-0.5px">KI</div><div style="position:absolute;left:333px;top:628.41px;font-size:16px;line-height:20px;font-weight:400;color:#0d7342;white-space:nowrap;-webkit-text-stroke:0.6px #0d7342;letter-spacing:-0.5px">20</div><div style="position:absolute;right:1468.70px;top:605.41px;font-size:16px;line-height:20px;font-weight:400;color:#0d7342;white-space:nowrap;-webkit-text-stroke:0.6px #0d7342;">-</div><div style="position:absolute;left:540.6px;top:616.91px;font-size:16px;line-height:20px;font-weight:400;color:#46494c;white-space:nowrap;letter-spacing:-0.110px;">Logistics LTD</div><div style="position:absolute;left:749.6px;top:616.91px;font-size:16px;line-height:20px;font-weight:400;color:#0d7342;white-space:nowrap;letter-spacing:-0.065px;-webkit-text-stroke:0.6px #0d7342;">198345</div><div style="position:absolute;left:822.6px;top:616.91px;font-size:16px;line-height:20px;font-weight:400;color:#0d6f3f;white-space:nowrap;letter-spacing:-0.402px;">Hamburg</div><div style="position:absolute;left:964.9px;top:616.91px;font-size:16px;line-height:20px;font-weight:400;color:#0d6f3f;white-space:nowrap;letter-spacing:-0.402px;">Hamburg</div><div style="position:absolute;left:1110.2px;top:616.91px;font-size:16px;line-height:20px;font-weight:400;color:#46494c;white-space:nowrap;transform:scaleX(0.9350);transform-origin:0 0;">2 x 40HC</div><div style="position:absolute;left:1379.3px;top:616.91px;font-size:16px;line-height:20px;font-weight:400;color:#46494c;white-space:nowrap;letter-spacing:-0.309px;">$0.00</div><div style="position:absolute;left:1573.5px;top:616.91px;font-size:16px;line-height:20px;font-weight:400;color:#46494c;white-space:nowrap;">0</div><div style="position:absolute;left:1677px;top:616.91px;font-size:16px;line-height:20px;font-weight:400;color:#46494c;white-space:nowrap;">0</div><div style="position:absolute;left:1770px;top:616.91px;font-size:16px;line-height:20px;font-weight:400;color:#46494c;white-space:nowrap;">0</div><div style="position:absolute;left:333px;top:672.96px;font-size:16px;line-height:20px;font-weight:400;color:#0d7342;white-space:nowrap;-webkit-text-stroke:0.6px #0d7342;letter-spacing:-0.5px">BU</div><div style="position:absolute;right:1395.90px;top:672.96px;font-size:16px;line-height:20px;font-weight:400;color:#0d7342;white-space:nowrap;-webkit-text-stroke:0.6px #0d7342;">0719</div><div style="position:absolute;left:540.6px;top:672.96px;font-size:16px;line-height:20px;font-weight:400;color:#46494c;white-space:nowrap;letter-spacing:-0.104px;">Container Logistics Inc.</div><div style="position:absolute;left:749.6px;top:672.96px;font-size:16px;line-height:20px;font-weight:400;color:#0d7342;white-space:nowrap;letter-spacing:-0.065px;-webkit-text-stroke:0.6px #0d7342;">198670</div><div style="position:absolute;left:822.6px;top:672.96px;font-size:16px;line-height:20px;font-weight:400;color:#0d6f3f;white-space:nowrap;letter-spacing:-0.652px;">Dallas, TX</div><div style="position:absolute;left:964.9px;top:672.96px;font-size:16px;line-height:20px;font-weight:400;color:#0d6f3f;white-space:nowrap;letter-spacing:-0.652px;">Dallas, TX</div><div style="position:absolute;left:1110.2px;top:672.96px;font-size:16px;line-height:20px;font-weight:400;color:#46494c;white-space:nowrap;transform:scaleX(0.9350);transform-origin:0 0;">2 x 20DC</div><div style="position:absolute;left:1379.3px;top:672.96px;font-size:16px;line-height:20px;font-weight:400;color:#46494c;white-space:nowrap;letter-spacing:-0.309px;">$0.00</div><div style="position:absolute;left:1573.5px;top:672.96px;font-size:16px;line-height:20px;font-weight:400;color:#46494c;white-space:nowrap;">0</div><div style="position:absolute;left:1677px;top:672.96px;font-size:16px;line-height:20px;font-weight:400;color:#46494c;white-space:nowrap;">0</div><div style="position:absolute;left:1770px;top:672.96px;font-size:16px;line-height:20px;font-weight:400;color:#46494c;white-space:nowrap;">0</div><div style="position:absolute;left:333px;top:717.31px;font-size:16px;line-height:20px;font-weight:400;color:#0d7342;white-space:nowrap;-webkit-text-stroke:0.6px #0d7342;letter-spacing:-0.5px">GA</div><div style="position:absolute;left:333px;top:740.31px;font-size:16px;line-height:20px;font-weight:400;color:#0d7342;white-space:nowrap;-webkit-text-stroke:0.6px #0d7342;letter-spacing:-0.5px">20</div><div style="position:absolute;right:1432.00px;top:717.31px;font-size:16px;line-height:20px;font-weight:400;color:#0d7342;white-space:nowrap;-webkit-text-stroke:0.6px #0d7342;">E-</div><div style="position:absolute;left:540.6px;top:728.81px;font-size:16px;line-height:20px;font-weight:400;color:#46494c;white-space:nowrap;letter-spacing:-0.123px;">Shipping company</div><div style="position:absolute;left:749.6px;top:728.81px;font-size:16px;line-height:20px;font-weight:400;color:#0d7342;white-space:nowrap;letter-spacing:-0.065px;-webkit-text-stroke:0.6px #0d7342;">202137</div><div style="position:absolute;left:822.6px;top:728.81px;font-size:16px;line-height:20px;font-weight:400;color:#0d6f3f;white-space:nowrap;letter-spacing:-0.402px;">Hamburg</div><div style="position:absolute;left:964.9px;top:728.81px;font-size:16px;line-height:20px;font-weight:400;color:#0d6f3f;white-space:nowrap;letter-spacing:-0.402px;">Hamburg</div><div style="position:absolute;left:1110.2px;top:728.81px;font-size:16px;line-height:20px;font-weight:400;color:#46494c;white-space:nowrap;transform:scaleX(0.9350);transform-origin:0 0;">31 x 40DC</div><div style="position:absolute;left:1379.3px;top:728.81px;font-size:16px;line-height:20px;font-weight:400;color:#46494c;white-space:nowrap;letter-spacing:-0.309px;">$0.00</div><div style="position:absolute;left:1573.5px;top:728.81px;font-size:16px;line-height:20px;font-weight:400;color:#46494c;white-space:nowrap;">0</div><div style="position:absolute;left:1677px;top:728.81px;font-size:16px;line-height:20px;font-weight:400;color:#46494c;white-space:nowrap;">5</div><div style="position:absolute;left:1770px;top:728.81px;font-size:16px;line-height:20px;font-weight:400;color:#46494c;white-space:nowrap;">0</div><div style="position:absolute;left:333px;top:786.36px;font-size:16px;line-height:20px;font-weight:400;color:#0d7342;white-space:nowrap;-webkit-text-stroke:0.6px #0d7342;letter-spacing:-0.5px">BU</div><div style="position:absolute;right:1395.90px;top:786.36px;font-size:16px;line-height:20px;font-weight:400;color:#0d7342;white-space:nowrap;-webkit-text-stroke:0.6px #0d7342;">09</div><div style="position:absolute;left:540.6px;top:775.76px;font-size:16px;line-height:20px;font-weight:400;color:#46494c;white-space:nowrap;letter-spacing:-0.106px;">Yet Another Logistics</div><div style="position:absolute;left:540.6px;top:796.96px;font-size:16px;line-height:20px;font-weight:400;color:#46494c;white-space:nowrap;letter-spacing:-0.147px;">Company</div><div style="position:absolute;left:749.6px;top:786.36px;font-size:16px;line-height:20px;font-weight:400;color:#0d7342;white-space:nowrap;letter-spacing:-0.065px;-webkit-text-stroke:0.6px #0d7342;">203238</div><div style="position:absolute;left:822.6px;top:786.36px;font-size:16px;line-height:20px;font-weight:400;color:#0d6f3f;white-space:nowrap;letter-spacing:-0.652px;">Dallas, TX</div><div style="position:absolute;left:964.9px;top:786.36px;font-size:16px;line-height:20px;font-weight:400;color:#0d6f3f;white-space:nowrap;letter-spacing:-0.652px;">Dallas, TX</div><div style="position:absolute;left:1110.2px;top:786.36px;font-size:16px;line-height:20px;font-weight:400;color:#46494c;white-space:nowrap;transform:scaleX(0.9350);transform-origin:0 0;">1 x 20DC</div><div style="position:absolute;left:1379.3px;top:786.36px;font-size:16px;line-height:20px;font-weight:400;color:#46494c;white-space:nowrap;letter-spacing:-0.309px;">$0.00</div><div style="position:absolute;left:1573.5px;top:786.36px;font-size:16px;line-height:20px;font-weight:400;color:#46494c;white-space:nowrap;">0</div><div style="position:absolute;left:1677px;top:786.36px;font-size:16px;line-height:20px;font-weight:400;color:#46494c;white-space:nowrap;">0</div><div style="position:absolute;left:1770px;top:786.36px;font-size:16px;line-height:20px;font-weight:400;color:#46494c;white-space:nowrap;">0</div><div style="position:absolute;left:333px;top:842.06px;font-size:16px;line-height:20px;font-weight:400;color:#0d7342;white-space:nowrap;-webkit-text-stroke:0.6px #0d7342;letter-spacing:-0.5px">BU</div><div style="position:absolute;right:1395.90px;top:842.06px;font-size:16px;line-height:20px;font-weight:400;color:#0d7342;white-space:nowrap;-webkit-text-stroke:0.6px #0d7342;">19</div><div style="position:absolute;left:540.6px;top:831.46px;font-size:16px;line-height:20px;font-weight:400;color:#46494c;white-space:nowrap;letter-spacing:-0.107px;">Container Logistics</div><div style="position:absolute;left:540.6px;top:852.66px;font-size:16px;line-height:20px;font-weight:400;color:#46494c;white-space:nowrap;letter-spacing:-0.139px;">company</div><div style="position:absolute;left:749.6px;top:842.06px;font-size:16px;line-height:20px;font-weight:400;color:#0d7342;white-space:nowrap;letter-spacing:-0.065px;-webkit-text-stroke:0.6px #0d7342;">205186</div><div style="position:absolute;left:822.6px;top:842.06px;font-size:16px;line-height:20px;font-weight:400;color:#0d6f3f;white-space:nowrap;letter-spacing:-0.652px;">Dallas, TX</div><div style="position:absolute;left:964.9px;top:842.06px;font-size:16px;line-height:20px;font-weight:400;color:#0d6f3f;white-space:nowrap;letter-spacing:-0.652px;">Dallas, TX</div><div style="position:absolute;left:1110.2px;top:842.06px;font-size:16px;line-height:20px;font-weight:400;color:#46494c;white-space:nowrap;transform:scaleX(0.9350);transform-origin:0 0;">2 x 20DC</div><div style="position:absolute;left:1379.3px;top:842.06px;font-size:16px;line-height:20px;font-weight:400;color:#46494c;white-space:nowrap;letter-spacing:-0.309px;">$0.00</div><div style="position:absolute;left:1573.5px;top:842.06px;font-size:16px;line-height:20px;font-weight:400;color:#46494c;white-space:nowrap;">0</div><div style="position:absolute;left:1677px;top:842.06px;font-size:16px;line-height:20px;font-weight:400;color:#46494c;white-space:nowrap;">0</div><div style="position:absolute;left:1770px;top:842.06px;font-size:16px;line-height:20px;font-weight:400;color:#46494c;white-space:nowrap;">0</div><div style="position:absolute;left:333px;top:897.26px;font-size:16px;line-height:20px;font-weight:400;color:#0d7342;white-space:nowrap;-webkit-text-stroke:0.6px #0d7342;letter-spacing:-0.5px">GA</div><div style="position:absolute;right:1392.40px;top:897.26px;font-size:16px;line-height:20px;font-weight:400;color:#0d7342;white-space:nowrap;-webkit-text-stroke:0.6px #0d7342;">XX</div><div style="position:absolute;left:540.6px;top:886.66px;font-size:16px;line-height:20px;font-weight:400;color:#46494c;white-space:nowrap;letter-spacing:-0.115px;">Moving containers</div><div style="position:absolute;left:540.6px;top:907.86px;font-size:16px;line-height:20px;font-weight:400;color:#46494c;white-space:nowrap;letter-spacing:-0.102px;">globally</div><div style="position:absolute;left:749.6px;top:897.26px;font-size:16px;line-height:20px;font-weight:400;color:#0d7342;white-space:nowrap;letter-spacing:-0.065px;-webkit-text-stroke:0.6px #0d7342;">205828</div><div style="position:absolute;left:822.6px;top:897.26px;font-size:16px;line-height:20px;font-weight:400;color:#0d6f3f;white-space:nowrap;letter-spacing:-0.402px;">Hamburg</div><div style="position:absolute;left:964.9px;top:897.26px;font-size:16px;line-height:20px;font-weight:400;color:#0d6f3f;white-space:nowrap;letter-spacing:-0.402px;">Hamburg</div><div style="position:absolute;left:1110.2px;top:897.26px;font-size:16px;line-height:20px;font-weight:400;color:#46494c;white-space:nowrap;transform:scaleX(0.9350);transform-origin:0 0;">17 x 40HC</div><div style="position:absolute;left:1379.3px;top:897.26px;font-size:16px;line-height:20px;font-weight:400;color:#46494c;white-space:nowrap;letter-spacing:-0.309px;">$0.00</div><div style="position:absolute;left:1573.5px;top:897.26px;font-size:16px;line-height:20px;font-weight:400;color:#46494c;white-space:nowrap;">0</div><div style="position:absolute;left:1677px;top:897.26px;font-size:16px;line-height:20px;font-weight:400;color:#46494c;white-space:nowrap;">17</div><div style="position:absolute;left:1770px;top:897.26px;font-size:16px;line-height:20px;font-weight:400;color:#46494c;white-space:nowrap;">0</div><svg style="position:absolute;left:1743px;top:64px" width="15" height="15" viewBox="0 0 15 15"><path d="M7.5 1 V14 M1 7.5 H14" stroke="#fff" stroke-width="2"/></svg><div style="position:absolute;left:1561px;top:325px;width:1px;height:610px;background:#d6d6d6"></div><div style="position:absolute;left:341.3px;top:392.5px;width:149.8px;height:25.100000000000023px;background:#ececec"></div><div style="position:absolute;left:341.3px;top:449.2px;width:149.8px;height:24.80000000000001px;background:#ececec"></div><div style="position:absolute;left:345.7px;top:503.8px;width:150.3px;height:24.999999999999943px;background:#ececec"></div><div style="position:absolute;left:345.7px;top:556.3px;width:150.3px;height:25.5px;background:#ececec"></div><div style="position:absolute;left:345.7px;top:601.8px;width:99.69999999999999px;height:43.90000000000009px;background:#ececec"></div><div style="position:absolute;left:345.7px;top:669.8px;width:150.3px;height:25.40000000000009px;background:#ececec"></div><div style="position:absolute;left:345.7px;top:714.4px;width:134.10000000000002px;height:44.0px;background:#ececec"></div><div style="position:absolute;left:345.7px;top:781.8px;width:164.0px;height:26.800000000000068px;background:#ececec"></div><div style="position:absolute;left:345.7px;top:835.1px;width:164.7px;height:26.5px;background:#ececec"></div><div style="position:absolute;left:345.7px;top:891.8px;width:168.50000000000006px;height:27.200000000000045px;background:#ececec"></div><div style="position:absolute;left:311px;top:940px;width:1595px;height:1px;background:#e0e0e0"></div><div style="position:absolute;left:1744px;top:939px;width:149px;height:21px;background:#0d7342;border-radius:12px"></div><svg style="position:absolute;left:0;top:0" width="1920" height="941"><g fill="none" stroke="#b71a1a" stroke-width="3.2" stroke-dasharray="12 8"><path d="M4 465 H281"/><path d="M4 639 H281"/><path d="M3 471.5 V639"/><path d="M281 470 V639"/><path d="M1714 33 H1920"/><path d="M1706 113 H1920"/><path d="M1707 34 V113"/></g><path d="M1616.5 128.5 L1693 78" stroke="#b71a1a" stroke-width="3"/><path d="M1703 71 L1687 73 L1695 85 Z" fill="#b71a1a"/><path d="M272 665.5 L215 592" stroke="#b71a1a" stroke-width="3"/><path d="M207.5 583 L210.5 599 L222.5 590.5 Z" fill="#b71a1a"/></svg></body></html>
